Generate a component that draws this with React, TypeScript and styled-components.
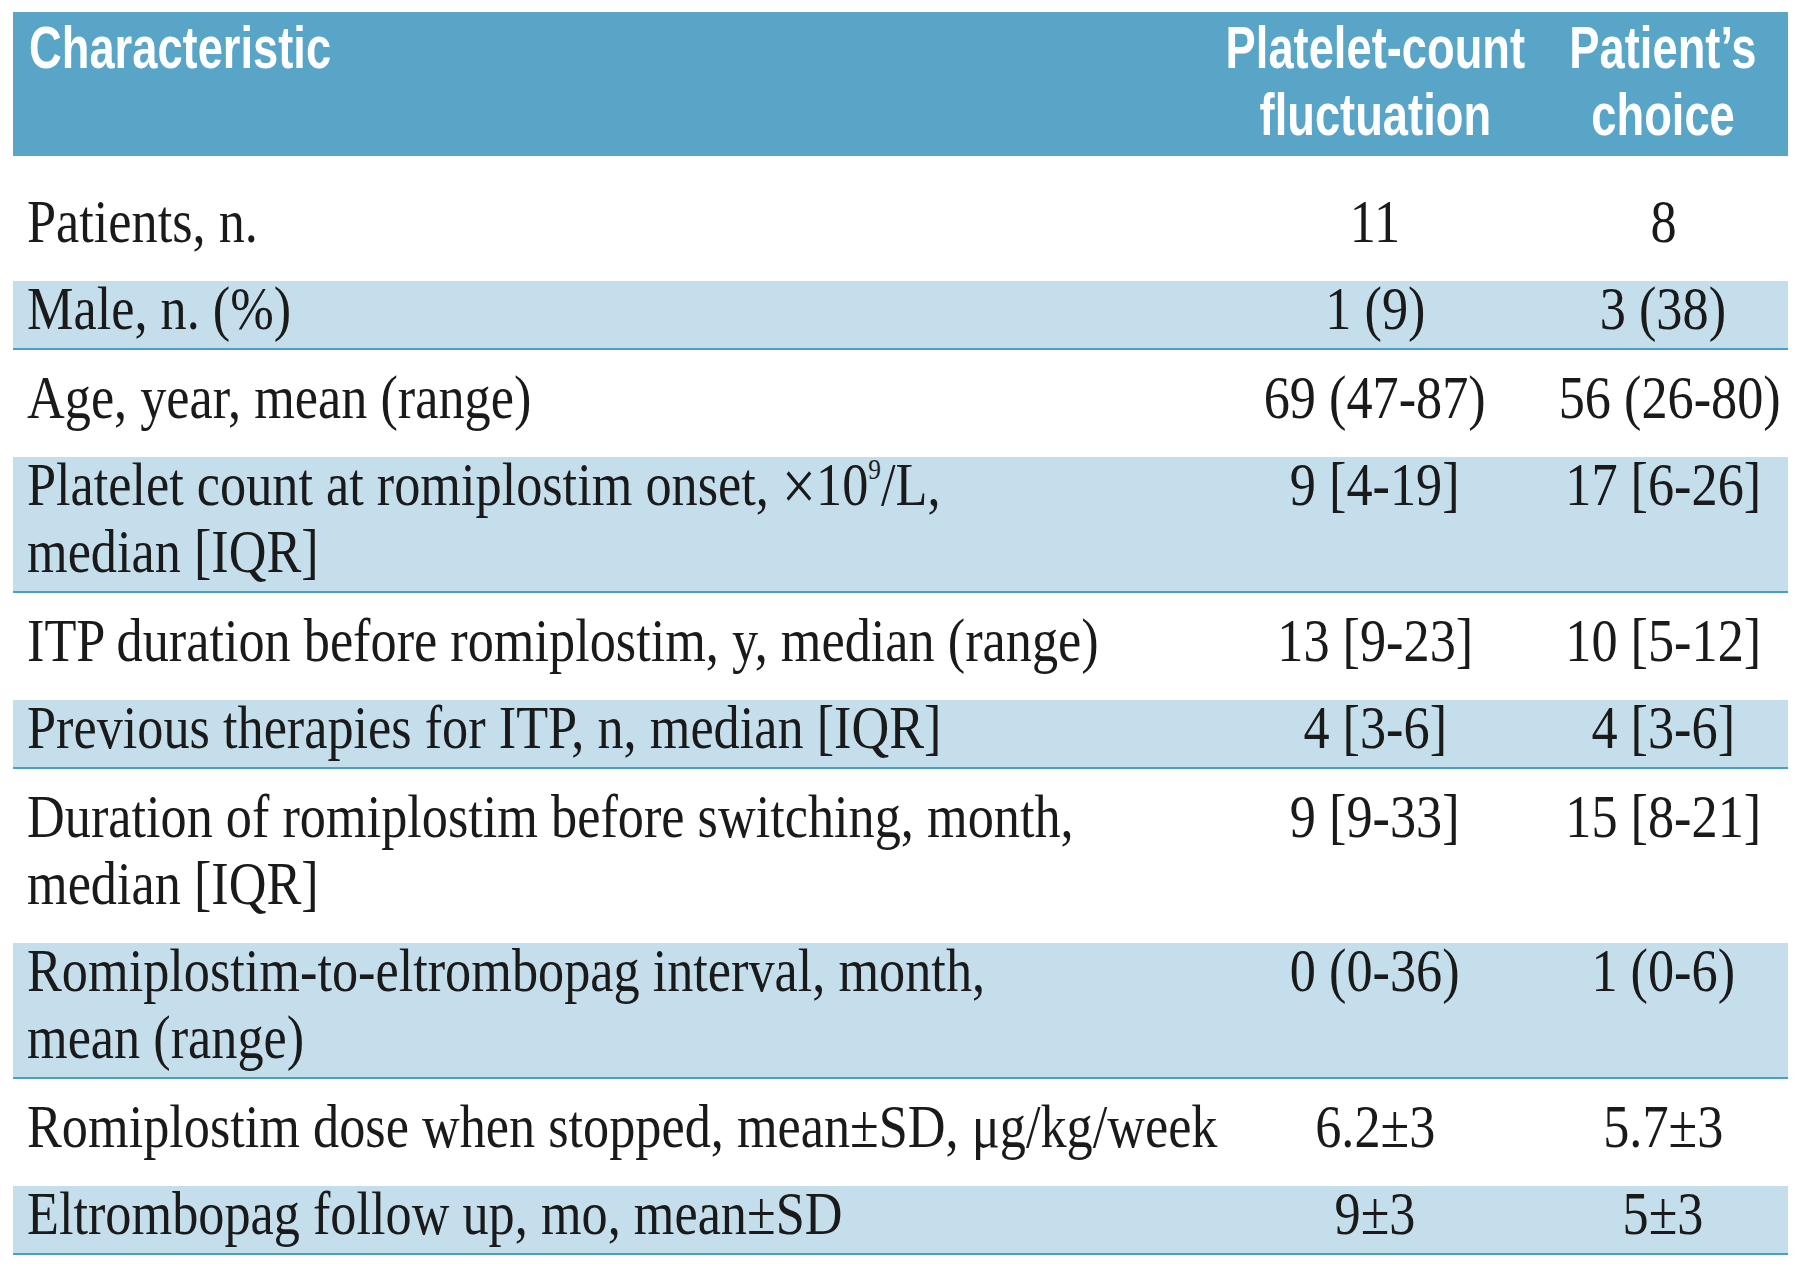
import styled, { createGlobalStyle } from "styled-components";

const GlobalStyle = createGlobalStyle`
  html, body {
    margin: 0;
    padding: 0;
    background: #fff;
  }
`;

const Page = styled.main`
  padding: 12px 12px 0 13px;
  width: 1775px;
`;

const Table = styled.div`
  display: flex;
  flex-direction: column;
`;

const grid = `
  display: grid;
  grid-template-columns: 1199px 326px 1fr;
`;

const HeadRow = styled.div`
  ${grid}
  background: #58a5c7;
  padding: 2px 0 8px;
`;

const HeadCell = styled.div<{ $center?: boolean }>`
  display: flex;
  flex-direction: column;
  align-items: ${(p) => (p.$center ? "center" : "flex-start")};
  padding-left: ${(p) => (p.$center ? "0" : "16px")};
  white-space: nowrap;
`;

const HeadText = styled.span<{ $center?: boolean }>`
  display: inline-block;
  font-family: "Liberation Sans", Arial, sans-serif;
  font-weight: 700;
  font-size: 60px;
  line-height: 67px;
  color: #fff;
  transform: scaleX(0.755);
  transform-origin: ${(p) => (p.$center ? "center" : "left")} center;
`;

const Row = styled.div<{ $shaded?: boolean; $first?: boolean }>`
  ${grid}
  background: ${(p) => (p.$shaded ? "#c5deeb" : "#fff")};
  border-bottom: 2px solid ${(p) => (p.$shaded ? "#4a9fc6" : "transparent")};
  padding: ${(p) => (p.$shaded ? "0 0 6px" : p.$first ? "38px 0 24px" : "20px 0 24px")};
`;

const Cell = styled.div<{ $center?: boolean }>`
  margin-top: -6px;
  display: flex;
  flex-direction: column;
  align-items: ${(p) => (p.$center ? "center" : "flex-start")};
  padding-left: ${(p) => (p.$center ? "0" : "14px")};
  white-space: nowrap;
`;

const Text = styled.span<{ $center?: boolean }>`
  display: inline-block;
  font-family: "Liberation Serif", "Times New Roman", serif;
  font-size: 62px;
  line-height: 67px;
  color: #1a1a1a;
  transform: scaleX(0.843);
  transform-origin: ${(p) => (p.$center ? "center" : "left")} center;

  sup {
    font-size: 30px;
    line-height: 0;
    vertical-align: 26px;
  }
`;

const Times = styled.span`
  font-size: 72px;
  line-height: 0;
  vertical-align: -5px;
`;

type Item = {
  label: React.ReactNode[];
  a: string;
  b: string;
};

const rows: Item[] = [
  { label: ["Patients, n."], a: "11", b: "8" },
  { label: ["Male, n. (%)"], a: "1 (9)", b: "3 (38)" },
  { label: ["Age, year, mean (range)"], a: "69 (47-87)", b: "56 (26-80)" },
  {
    label: [
      <>
        Platelet count at romiplostim onset, <Times>×</Times>10<sup>9</sup>/L,
      </>,
      "median [IQR]",
    ],
    a: "9 [4-19]",
    b: "17 [6-26]",
  },
  {
    label: ["ITP duration before romiplostim, y, median (range)"],
    a: "13 [9-23]",
    b: "10 [5-12]",
  },
  { label: ["Previous therapies for ITP, n, median [IQR]"], a: "4 [3-6]", b: "4 [3-6]" },
  {
    label: ["Duration of romiplostim before switching, month,", "median [IQR]"],
    a: "9 [9-33]",
    b: "15 [8-21]",
  },
  {
    label: ["Romiplostim-to-eltrombopag interval, month,", "mean (range)"],
    a: "0 (0-36)",
    b: "1 (0-6)",
  },
  {
    label: ["Romiplostim dose when stopped, mean±SD, μg/kg/week"],
    a: "6.2±3",
    b: "5.7±3",
  },
  { label: ["Eltrombopag follow up, mo, mean±SD"], a: "9±3", b: "5±3" },
];

function App() {
  return (
    <>
      <GlobalStyle />
      <Page>
        <Table>
          <HeadRow>
            <HeadCell>
              <HeadText>Characteristic</HeadText>
            </HeadCell>
            <HeadCell $center>
              <HeadText $center>Platelet-count</HeadText>
              <HeadText $center>fluctuation</HeadText>
            </HeadCell>
            <HeadCell $center>
              <HeadText $center>Patient’s</HeadText>
              <HeadText $center>choice</HeadText>
            </HeadCell>
          </HeadRow>

          {rows.map((r, i) => (
            <Row key={i} $shaded={i % 2 === 1} $first={i === 0}>
              <Cell>
                {r.label.map((l, j) => (
                  <Text key={j}>{l}</Text>
                ))}
              </Cell>
              <Cell $center>
                <Text $center>{r.a}</Text>
              </Cell>
              <Cell $center>
                <Text $center>{r.b}</Text>
              </Cell>
            </Row>
          ))}
        </Table>
      </Page>
    </>
  );
}

export default App;
